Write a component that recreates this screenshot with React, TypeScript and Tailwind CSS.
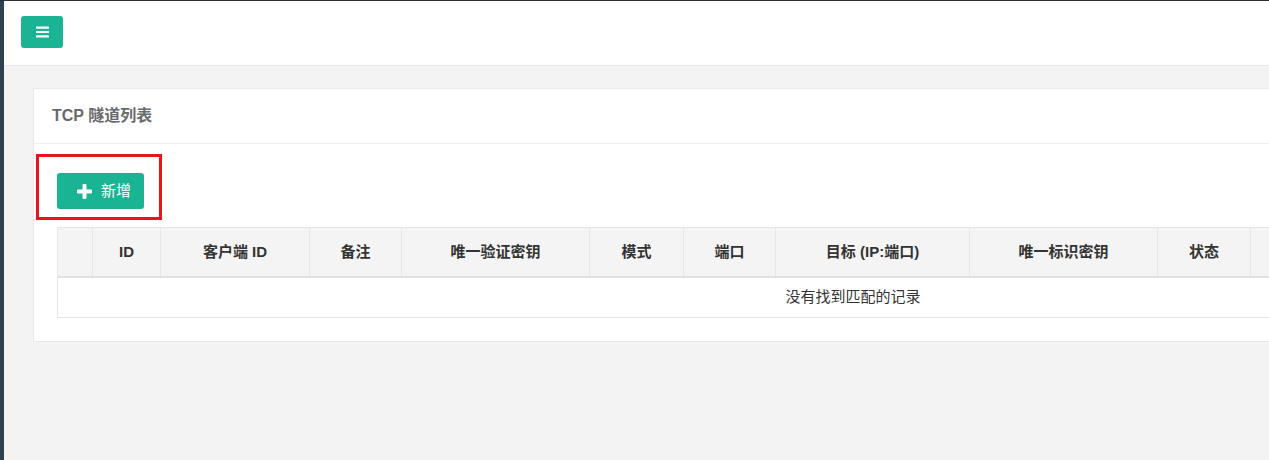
import React from 'react'

const columns = [
  { label: '', w: 35 },
  { label: 'ID', w: 68 },
  { label: '客户端 ID', w: 149 },
  { label: '备注', w: 92 },
  { label: '唯一验证密钥', w: 188 },
  { label: '模式', w: 94 },
  { label: '端口', w: 92 },
  { label: '目标 (IP:端口)', w: 194 },
  { label: '唯一标识密钥', w: 188 },
  { label: '状态', w: 93 },
  { label: '', w: 407 },
]

const font = { fontFamily: '"Liberation Sans", "Noto Sans CJK SC", Arial, sans-serif' }

function BarsIcon() {
  return (
    <svg width="13" height="12" viewBox="0 0 13 12" fill="white">
      <rect x="0" y="0.5" width="13" height="2.2" rx="0.6" />
      <rect x="0" y="4.9" width="13" height="2.2" rx="0.6" />
      <rect x="0" y="9.3" width="13" height="2.2" rx="0.6" />
    </svg>
  )
}

function PlusIcon() {
  return (
    <svg width="15" height="15" viewBox="0 0 15 15" fill="white">
      <rect x="5.5" y="0" width="4" height="15" rx="1" />
      <rect x="0" y="5.5" width="15" height="4" rx="1" />
    </svg>
  )
}

export default function App() {
  return (
    <div className="w-screen h-screen overflow-hidden flex bg-[#f3f3f4] border-t border-[#2a2f36]" style={font}>
      {/* sidebar edge */}
      <div className="w-[4px] shrink-0 bg-[#2f4050]" />

      <div className="flex-1 flex flex-col min-w-0">
        {/* top bar */}
        <div className="h-[65px] shrink-0 bg-white border-b border-[#e7eaec] pl-[17px] pt-[15px]">
          <button className="w-[42px] h-[32px] rounded-[3px] bg-[#1ab394] flex items-center justify-center">
            <BarsIcon />
          </button>
        </div>

        {/* content */}
        <div className="pl-[29px] pt-[22px]">
          <div className="w-[1640px] bg-white border border-[#e7eaec] border-r-0">
            <div className="h-[55px] border-b border-[#eef0f1] flex items-center pl-[18px]">
              <h5 className="text-[16px] font-bold text-[#676a6c]">TCP 隧道列表</h5>
            </div>

            <div className="pl-[2px] pt-[10px] pb-[23px]">
              <div className="w-[126px] h-[66px] border-[3px] border-[#e8141c] pl-[18px] pt-[16px]">
                <button className="w-[87px] h-[36px] rounded-[3px] bg-[#1ab394] text-white text-[15px] flex items-center pl-[20px] gap-[9px]">
                  <PlusIcon />
                  <span>新增</span>
                </button>
              </div>

              <div className="mt-[7px] ml-[21px] w-[1592px] border border-[#e7e7e7]">
                <div className="flex h-[50px] bg-[#f4f4f4] border-b-2 border-[#e2e2e2]">
                  {columns.map((c, i) => (
                    <div
                      key={i}
                      className={`shrink-0 flex items-center justify-center text-[15px] font-bold text-[#333] ${i < columns.length - 1 ? 'border-r border-[#e7e7e7]' : ''}`}
                      style={{ width: c.w }}
                    >
                      {c.label}
                    </div>
                  ))}
                </div>
                <div className="h-[39px] flex items-center justify-center text-[15px] text-[#333]">
                  没有找到匹配的记录
                </div>
              </div>
            </div>
          </div>
        </div>
      </div>
    </div>
  )
}
